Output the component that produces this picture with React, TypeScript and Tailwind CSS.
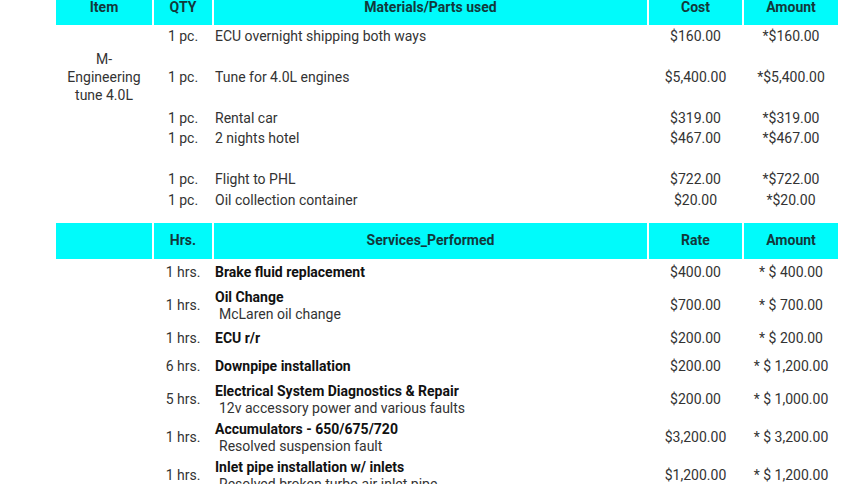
const cols = "grid grid-cols-[96px_58px_433px_93px_94px] gap-x-[2px]";

type Part = { qty: string; desc: string; cost: string; amount: string } | null;

const parts: Part[] = [
  { qty: "1 pc.", desc: "ECU overnight shipping both ways", cost: "$160.00", amount: "*$160.00" },
  null,
  { qty: "1 pc.", desc: "Tune for 4.0L engines", cost: "$5,400.00", amount: "*$5,400.00" },
  null,
  { qty: "1 pc.", desc: "Rental car", cost: "$319.00", amount: "*$319.00" },
  { qty: "1 pc.", desc: "2 nights hotel", cost: "$467.00", amount: "*$467.00" },
  null,
  { qty: "1 pc.", desc: "Flight to PHL", cost: "$722.00", amount: "*$722.00" },
  { qty: "1 pc.", desc: "Oil collection container", cost: "$20.00", amount: "*$20.00" },
];

const services = [
  { hrs: "1 hrs.", title: "Brake fluid replacement", note: "", rate: "$400.00", amount: "* $ 400.00" },
  { hrs: "1 hrs.", title: "Oil Change", note: "McLaren oil change", rate: "$700.00", amount: "* $ 700.00" },
  { hrs: "1 hrs.", title: "ECU r/r", note: "", rate: "$200.00", amount: "* $ 200.00" },
  { hrs: "6 hrs.", title: "Downpipe installation", note: "", rate: "$200.00", amount: "* $ 1,200.00" },
  { hrs: "5 hrs.", title: "Electrical System Diagnostics & Repair", note: "12v accessory power and various faults", rate: "$200.00", amount: "* $ 1,000.00" },
  { hrs: "1 hrs.", title: "Accumulators - 650/675/720", note: "Resolved suspension fault", rate: "$3,200.00", amount: "* $ 3,200.00" },
  { hrs: "1 hrs.", title: "Inlet pipe installation w/ inlets", note: "Resolved broken turbo air inlet pipe", rate: "$1,200.00", amount: "* $ 1,200.00" },
];

function Head({ labels }: { labels: string[] }) {
  return (
    <div className={`${cols} h-9`}>
      {labels.map((l, i) => (
        <div key={i} className="bg-[#00fbfb] flex items-center justify-center font-bold text-[#12393b]">
          {l}
        </div>
      ))}
    </div>
  );
}

export default function App() {
  return (
    <div className="w-[860px] h-[484px] overflow-hidden bg-white font-['Roboto',sans-serif] text-[14px] text-[#333]">
      <div className="ml-[56px] w-[782px] -mt-[11px]">
        <Head labels={["Item", "QTY", "Materials/Parts used", "Cost", "Amount"]} />

        {/* materials */}
        <div className={`${cols} grid-rows-[repeat(9,20.5px)] mt-px`}>
          <div className="row-span-5 row-start-1 col-start-1 flex items-center justify-center text-center leading-[18px]">
            M-
            <br />
            Engineering
            <br />
            tune 4.0L
          </div>
          {parts.map((p, i) =>
            p ? (
              <div key={i} className="contents">
                <div className="col-start-2 flex items-center justify-center" style={{ gridRowStart: i + 1 }}>{p.qty}</div>
                <div className="col-start-3 flex items-center pl-[1px]" style={{ gridRowStart: i + 1 }}>{p.desc}</div>
                <div className="col-start-4 flex items-center justify-center" style={{ gridRowStart: i + 1 }}>{p.cost}</div>
                <div className="col-start-5 flex items-center justify-center" style={{ gridRowStart: i + 1 }}>{p.amount}</div>
              </div>
            ) : null
          )}
        </div>

        <div className="h-[12px]" />
        <Head labels={["", "Hrs.", "Services_Performed", "Rate", "Amount"]} />

        {/* services */}
        {services.map((s, i) => (
          <div key={i} className={`${cols} ${s.note ? "h-[38px]" : "h-[28px]"}`}>
            <div />
            <div className="flex items-center justify-center">{s.hrs}</div>
            <div className="flex flex-col justify-center pl-[1px] leading-[17px]">
              <span className="font-bold text-[#111]">{s.title}</span>
              {s.note && <span className="pl-[4px] whitespace-nowrap">{s.note}</span>}
            </div>
            <div className="flex items-center justify-center">{s.rate}</div>
            <div className="flex items-center justify-center">{s.amount}</div>
          </div>
        ))}
      </div>
    </div>
  );
}
